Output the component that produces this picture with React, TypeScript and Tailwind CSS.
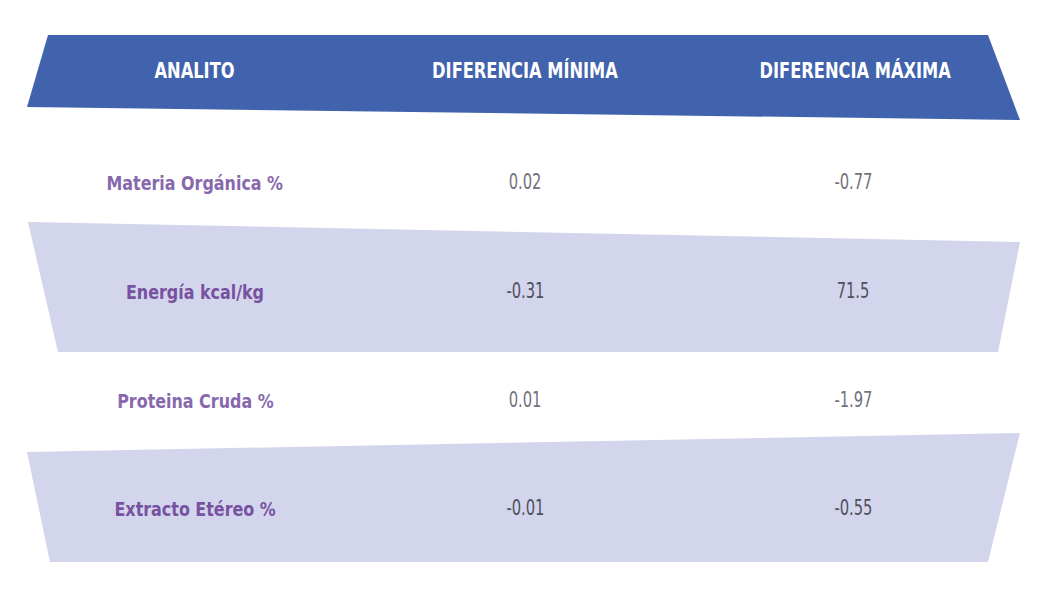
const font = { fontFamily: '"DejaVu Sans Condensed", "Liberation Sans", sans-serif' };

type Row = { label: string; min: string; max: string; shaded: boolean };

const rows: Row[] = [
  { label: "Materia Orgánica %", min: "0.02", max: "-0.77", shaded: false },
  { label: "Energía kcal/kg", min: "-0.31", max: "71.5", shaded: true },
  { label: "Proteina Cruda %", min: "0.01", max: "-1.97", shaded: false },
  { label: "Extracto Etéreo %", min: "-0.01", max: "-0.55", shaded: true },
];

const cols = "grid w-[993px] grid-cols-[336px_324px_333px] items-center text-center";

function Cells({ row }: { row: Row }) {
  const label = row.shaded ? "text-[#7752a0] font-bold" : "text-[#8768ad] font-semibold";
  const value = row.shaded ? "text-[#50505e]" : "text-[#72727c]";
  return (
    <>
      <div>
        <span className={`inline-block scale-x-[0.885] text-[20px] ${label}`}>{row.label}</span>
      </div>
      <div>
        <span className={`inline-block scale-x-[0.78] text-[21px] ${value}`}>{row.min}</span>
      </div>
      <div>
        <span className={`inline-block scale-x-[0.78] text-[21px] ${value}`}>{row.max}</span>
      </div>
    </>
  );
}

export default function App() {
  return (
    <div className="w-[1038px] h-[593px] bg-white pt-[35px] pl-[27px] overflow-hidden" style={font}>
      {/* header band */}
      <div
        className={`${cols} h-[85px] pb-[11px] bg-[#4163ad] text-white font-bold text-[21px]`}
        style={{ clipPath: "polygon(21px 0, 961px 0, 993px 85px, 0 72px)" }}
      >
        <div><span className="inline-block scale-x-[0.86]">ANALITO</span></div>
        <div><span className="inline-block scale-x-[0.86]">DIFERENCIA MÍNIMA</span></div>
        <div><span className="inline-block scale-x-[0.86] translate-x-[2px]">DIFERENCIA MÁXIMA</span></div>
      </div>

      <div className={`${cols} h-[102px] pt-[24px]`}>
        <Cells row={rows[0]} />
      </div>

      <div
        className={`${cols} h-[130px] pt-[10px] bg-[#d3d5ec]`}
        style={{ clipPath: "polygon(1px 0, 993px 20px, 971px 130px, 31px 130px)" }}
      >
        <Cells row={rows[1]} />
      </div>

      <div className={`${cols} h-[81px] pt-[17px]`}>
        <Cells row={rows[2]} />
      </div>

      <div
        className={`${cols} h-[129px] pt-[23px] bg-[#d3d5ec]`}
        style={{ clipPath: "polygon(0 19px, 993px 0, 961px 129px, 23px 129px)" }}
      >
        <Cells row={rows[3]} />
      </div>
    </div>
  );
}
